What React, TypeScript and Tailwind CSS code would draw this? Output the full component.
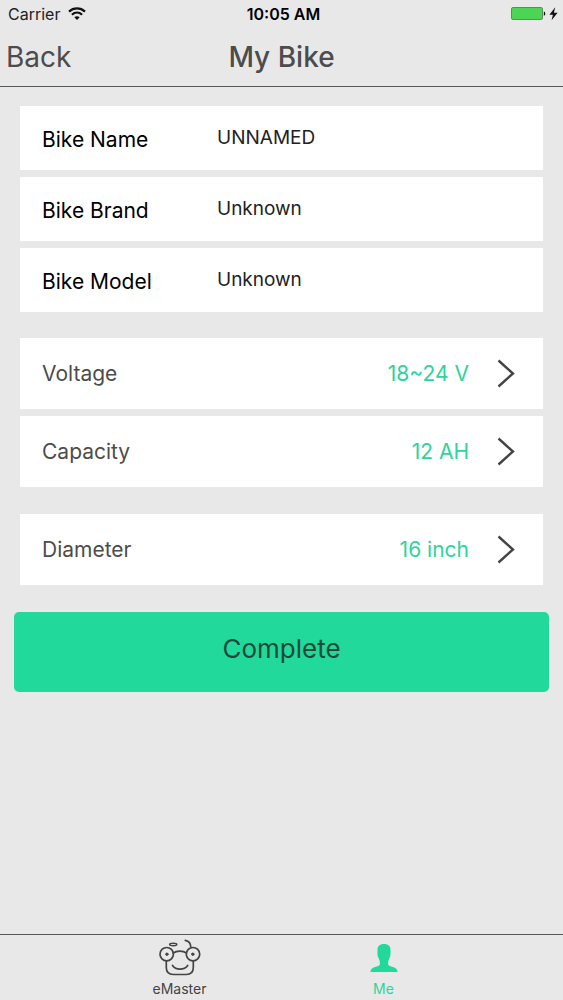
import { useState } from "react";

const initialBike = [
  { id: "name", label: "Bike Name", value: "UNNAMED" },
  { id: "brand", label: "Bike Brand", value: "Unknown" },
  { id: "model", label: "Bike Model", value: "Unknown" },
];

const battery = [
  { label: "Voltage", value: "18~24 V" },
  { label: "Capacity", value: "12 AH" },
];

const wheel = [{ label: "Diameter", value: "16 inch" }];

function WifiIcon() {
  return (
    <svg viewBox="0 0 18 14" className="w-[18px] h-[14px]" fill="none" stroke="#111" strokeWidth="2.2">
      <path d="M1 4.6C5.6.4 12.4.4 17 4.6" />
      <path d="M3.9 7.7c3-2.7 7.2-2.7 10.2 0" />
      <path d="M6.3 10.2c1.6-1.4 3.8-1.4 5.4 0L9 12.9z" fill="#111" stroke="none" />
    </svg>
  );
}

function BatteryIcon() {
  return (
    <svg viewBox="0 0 48 16" className="w-12 h-4">
      <rect x="0.5" y="1.5" width="31" height="12" rx="1.5" fill="#4cd552" stroke="#5f8a62" />
      <path d="M32.8 5.5c2 .3 2 4 0 4.3z" fill="#111" />
      <path d="M44.2 1.2 38.4 8.8h3.5L40.6 14.2 46.6 6.8h-3.7z" fill="#111" />
    </svg>
  );
}

function ChevronIcon() {
  return (
    <svg viewBox="0 0 18 30" className="w-[18px] h-[30px]" fill="none" stroke="#444" strokeWidth="2.4">
      <path d="M1.5 1.5 16 14.5 1.5 27.5" />
    </svg>
  );
}

function RobotIcon() {
  return (
    <svg viewBox="0 0 42 37" className="w-[42px] h-[37px]" fill="none" stroke="#444" strokeWidth="1.7" strokeLinecap="round">
      <circle cx="7.7" cy="15.2" r="6.7" />
      <circle cx="34" cy="15.2" r="6.7" />
      <circle cx="7.9" cy="15.2" r="1.2" fill="#444" strokeWidth="1" />
      <circle cx="33.8" cy="15.2" r="1.2" fill="#444" strokeWidth="1" />
      <path d="M14.3 14c3.4-2.5 9.7-2.5 13.1 0" />
      <path d="M7.3 22v6.5c0 4.5 2.5 7 7 7h13c4.500 0 7-2.500 7-7V22" />
      <path d="M13.500 26.500c3.300 4.800 11.800 4.800 15.200 0" />
      <ellipse cx="14.200" cy="5.500" rx="3.600" ry="1.200" strokeWidth="1.400" />
      <path d="M26.300 1.300c3.500.7 5.500 3.200 5.500 7" />
    </svg>
  );
}

function PersonIcon() {
  return (
    <svg viewBox="0 0 28 28" className="w-7 h-7" fill="#20d99a">
      <path d="M14 0c4.600 0 6.700 2.200 6.500 6.500-.1 2 .2 3.200-.1 5-.2 1.500-1 2.300-1.400 3.500-.3 1-.5 1.800-.8 2.600v2.800c.6 1.500 2.300 1.900 4.800 2.600 2.800.7 4.300 2.200 4.700 5H.3c.4-2.800 1.900-4.300 4.700-5 2.500-.7 4.200-1.100 4.800-2.600v-2.800c-.3-.8-.5-1.600-.8-2.600-.4-1.200-1.200-2-1.400-3.500-.3-1.800 0-3-.1-5C7.300 2.200 9.400 0 14 0z" />
    </svg>
  );
}

function SettingRow({ label, value }: { label: string; value: string }) {
  return (
    <button type="button" className="flex w-full items-center bg-white h-[71px] pl-[22px] pr-7 text-[21px] text-left">
      <span className="flex-1 pt-px text-[#4c4c4c]">{label}</span>
      <span className="mr-7 pt-px text-[#2bd59c]">{value}</span>
      <ChevronIcon />
    </button>
  );
}

export default function App() {
  const [bike, setBike] = useState(initialBike);

  const handleChange = (id: string, value: string) => {
    setBike(bike.map((field) => (field.id === id ? { ...field, value } : field)));
  };

  return (
    <div className="flex min-h-screen flex-col bg-[#e9e8e9] font-['Inter',sans-serif] text-black">
      {/* Status bar */}
      <div className="grid grid-cols-3 items-center h-7 pl-2 pr-1 text-base">
        <div className="flex items-center gap-2 text-[#222]">
          Carrier
          <WifiIcon />
        </div>
        <div className="text-center font-semibold">10:05 AM</div>
        <div className="flex justify-end">
          <BatteryIcon />
        </div>
      </div>

      {/* Header */}
      <header className="grid grid-cols-3 items-center h-[59px] border-b border-[#555] px-[6px] text-[28px] text-[#4c4c4c]">
        <button type="button" className="justify-self-start">
          Back
        </button>
        <h1 className="text-center font-medium whitespace-nowrap">My Bike</h1>
      </header>

      <main className="flex-1 pt-[19px]">
        {/* Bike details */}
        <div className="mx-5 flex flex-col gap-[7px]">
          {bike.map((field) => (
            <div key={field.id} className="flex items-center bg-white h-16 px-[22px]">
              <label htmlFor={field.id} className="w-[175px] shrink-0 pt-1 text-[21px]">
                {field.label}
              </label>
              <input
                id={field.id}
                type="text"
                value={field.value}
                onChange={(e) => handleChange(field.id, e.target.value)}
                className="min-w-0 flex-1 bg-transparent text-[19px] text-[#222] outline-none"
              />
            </div>
          ))}
        </div>

        {/* Battery */}
        <div className="mx-5 mt-[26px] flex flex-col gap-[7px]">
          {battery.map((row) => (
            <SettingRow key={row.label} label={row.label} value={row.value} />
          ))}
        </div>

        {/* Wheel */}
        <div className="mx-5 mt-[27px]">
          {wheel.map((row) => (
            <SettingRow key={row.label} label={row.label} value={row.value} />
          ))}
        </div>

        <div className="mx-[14px] mt-[27px]">
          <button type="button" className="w-full h-20 rounded-[5px] bg-[#20d99a] pb-2 text-[26px] text-[#1d4a3a]">
            Complete
          </button>
        </div>
      </main>

      {/* Tab bar */}
      <nav className="flex justify-center border-t border-[#555] h-[66px] text-sm">
        <a href="#emaster" className="flex w-[204px] flex-col items-center pt-1 text-[#444]">
          <RobotIcon />
          <span className="mt-[3px]">eMaster</span>
        </a>
        <a href="#me" className="flex w-[204px] flex-col items-center pt-[9px] text-[#2bd59c]">
          <PersonIcon />
          <span className="mt-[7px]">Me</span>
        </a>
      </nav>
    </div>
  );
}
